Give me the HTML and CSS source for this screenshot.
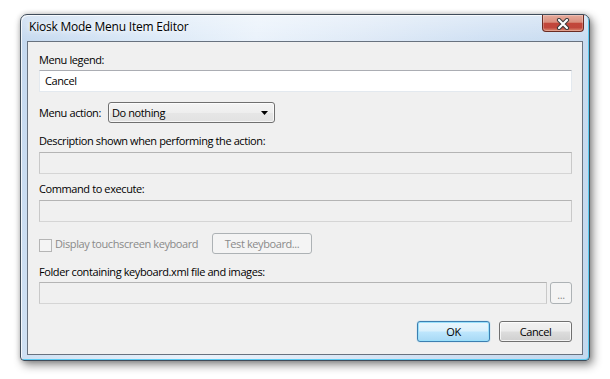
FILE: index.html
```html
<!DOCTYPE html>
<html lang="en">
<head>
<meta charset="utf-8">
<title>Kiosk Mode Menu Item Editor</title>
<link rel="stylesheet" href="styles.css">
</head>
<body>
<div class="window">
  <div class="titlebar">
    <span class="title">Kiosk Mode Menu Item Editor</span>
    <div class="close">
      <svg width="14" height="12" viewBox="0 0 14 12">
        <path d="M3 2 L11 10 M11 2 L3 10" stroke="#3a3a3a" stroke-width="4.2" stroke-linecap="round" fill="none"/>
        <path d="M3 2 L11 10 M11 2 L3 10" stroke="#ffffff" stroke-width="2.2" stroke-linecap="round" fill="none"/>
      </svg>
    </div>
  </div>
  <div class="client">
    <div class="lbl lbl-legend">Menu legend:</div>
    <div class="input in-legend">Cancel</div>
    <div class="action-row">
      <span class="action-lbl">Menu action:</span>
      <div class="select">
        <span>Do nothing</span>
        <svg width="7" height="4" viewBox="0 0 7 4"><path d="M0 0 H7 L3.5 4 Z" fill="#000"/></svg>
      </div>
    </div>
    <div class="lbl lbl-desc">Description shown when performing the action:</div>
    <div class="input disabled in-desc"></div>
    <div class="lbl lbl-cmd">Command to execute:</div>
    <div class="input disabled in-cmd"></div>
    <div class="kb-row">
      <span class="checkbox"></span>
      <span class="kb-text">Display touchscreen keyboard</span>
      <div class="btn btn-disabled btn-test">Test keyboard...</div>
    </div>
    <div class="lbl lbl-folder">Folder containing keyboard.xml file and images:</div>
    <div class="folder-row">
      <div class="input disabled in-folder"></div>
      <div class="btn btn-disabled btn-browse">...</div>
    </div>
    <div class="buttons">
      <div class="btn btn-default">OK</div>
      <div class="btn">Cancel</div>
    </div>
  </div>
</div>
</body>
</html>
```

FILE: styles.css
```css
html, body {
  margin: 0;
  padding: 0;
}
body {
  width: 610px;
  height: 379px;
  overflow: hidden;
  background: #ffffff;
  font-family: "Open Sans", "Noto Sans", sans-serif;
  font-size: 11px;
  letter-spacing: -0.4px;
  color: #000;
}
.window {
  box-sizing: border-box;
  margin: 14px 0 0 20px;
  width: 570px;
  height: 347px;
  border: 1px solid #3f4c5a;
  border-radius: 7px 7px 4px 4px;
  padding: 0 6px 5px 6px;
  display: flex;
  flex-direction: column;
  background:
    linear-gradient(to bottom, rgba(255,255,255,0.35) 0, rgba(255,255,255,0) 26px),
    linear-gradient(100deg, #c4d8ef 0%, #d8e7f6 18%, #eaf2fb 38%, #dfeaf7 55%, #cfe0f3 75%, #c3d8ee 100%);
  box-shadow:
    inset 1px 1px 0 rgba(255,255,255,0.75),
    inset -1px -1px 0 #5ccbf2,
    3px 4px 10px rgba(0,0,0,0.45),
    0 0 5px rgba(0,0,0,0.2);
}
.titlebar {
  height: 26px;
  flex: none;
  display: flex;
  justify-content: space-between;
  align-items: flex-start;
}
.title {
  font-size: 12px;
  letter-spacing: -0.22px;
  line-height: 16px;
  padding: 4px 0 0 2px;
  text-shadow: 0 0 5px #ffffff, 0 0 8px #ffffff;
}
.close {
  width: 42px;
  height: 17px;
  box-sizing: border-box;
  margin-right: -1px;
  border: 1px solid #6a2b22;
  border-top: none;
  border-radius: 0 0 4px 4px;
  background: linear-gradient(to bottom, #e7ab9c 0%, #d98e7d 45%, #c2473a 52%, #c0463b 78%, #dc8a70 100%);
  box-shadow: inset 0 0 0 1px rgba(255,255,255,0.25);
  display: flex;
  align-items: center;
  justify-content: center;
}
.close svg {
  display: block;
  margin-top: 1px;
}
.client {
  flex: 1;
  border: 1px solid #68727f;
  background: #f0f0f0;
  padding: 10px 10px 0 11px;
  display: flex;
  flex-direction: column;
}
.lbl {
  height: 16px;
  line-height: 16px;
  white-space: nowrap;
}
.input {
  box-sizing: border-box;
  height: 22px;
  background: #ffffff;
  border: 1px solid #e3e9ef;
  border-top-color: #abadb3;
  padding: 0 5px;
  line-height: 20px;
}
.input.disabled {
  background: #f0f0f0;
  border-color: #d5d5d5;
  border-top-color: #b4b4b4;
  border-left-color: #c9c9c9;
  border-right-color: #c9c9c9;
}
.in-legend { margin-top: 2px; }
.action-row {
  margin-top: 10px;
  display: flex;
  align-items: center;
  height: 21px;
}
.action-lbl {
  width: 69px;
  line-height: 16px;
}
.select {
  box-sizing: border-box;
  width: 167px;
  height: 21px;
  border: 1px solid #707070;
  border-radius: 3px;
  background: linear-gradient(to bottom, #f4f4f4 0%, #eeeeee 50%, #e6e6e6 51%, #e2e2e2 100%);
  box-shadow: inset 0 0 0 1px rgba(255,255,255,0.7);
  display: flex;
  align-items: center;
  justify-content: space-between;
  padding: 0 6px 0 3px;
  line-height: 16px;
}
.select svg { display: block; }
.lbl-desc { margin-top: 10px; }
.in-desc { margin-top: 3px; }
.lbl-cmd { margin-top: 7px; }
.in-cmd { margin-top: 3px; }
.kb-row {
  margin-top: 11px;
  height: 21px;
  display: flex;
  align-items: center;
}
.checkbox {
  box-sizing: border-box;
  width: 13px;
  height: 13px;
  border: 1px solid #b5b5b5;
  background: #f4f4f4;
  margin-top: 3px;
}
.kb-text {
  margin-left: 3px;
  color: #8a8a8a;
  line-height: 16px;
  width: 157px;
}
.btn {
  box-sizing: border-box;
  height: 21px;
  width: 73px;
  border: 1px solid #707070;
  border-radius: 3px;
  background: linear-gradient(to bottom, #f2f2f2 0%, #ebebeb 48%, #dddddd 52%, #cfcfcf 100%);
  box-shadow: inset 0 0 0 1px rgba(255,255,255,0.75);
  display: flex;
  align-items: center;
  justify-content: center;
  line-height: 16px;
}
.btn-disabled {
  border-color: #adb2b5;
  background: #f4f4f4;
  color: #8a8a8a;
  box-shadow: none;
}
.btn-test {
  width: 100px;
}
.lbl-folder { margin-top: 10px; }
.folder-row {
  margin-top: 2px;
  display: flex;
  gap: 3px;
}
.in-folder { width: 510px; }
.btn-browse {
  width: 22px;
  height: 22px;
  padding-top: 3px;
}
.buttons {
  margin-top: 17px;
  display: flex;
  justify-content: flex-end;
  gap: 9px;
}
.btn-default {
  border-color: #3c7fb1;
  background: linear-gradient(to bottom, #eaf6fd 0%, #d9f0fc 48%, #bee6fd 52%, #a7d9f5 100%);
  box-shadow: inset 0 0 0 1px #9ae0fb, 0 0 1px #48b1e4;
}
```
